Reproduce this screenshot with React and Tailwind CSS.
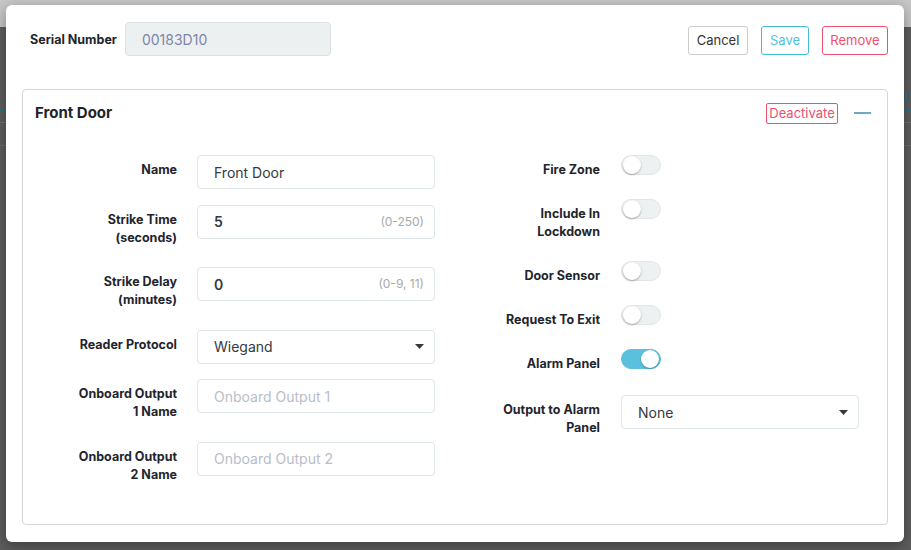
import React from 'react';

const font = { fontFamily: 'Inter, "Noto Sans", sans-serif' };

const Label = ({ children }) => (
  <div className="w-[142px] shrink-0 pt-[6px] pb-[5px] text-right text-[12.5px] leading-[18px] font-bold text-[#1f252d]">
    {children}
  </div>
);

const TextInput = ({ value, placeholder, hint, bold }) => (
  <div className="flex h-[34px] w-[238px] items-center justify-between rounded-[4px] border border-[#dfe6e8] bg-white pl-4 pr-[10px]">
    {value ? (
      <span className={`text-[14px] text-[#343a40] ${bold ? 'font-semibold' : ''}`}>{value}</span>
    ) : (
      <span className="text-[14px] text-[#b9bdc9]">{placeholder}</span>
    )}
    {hint && <span className="text-[12px] text-[#a9a9a9]">{hint}</span>}
  </div>
);

const SelectBox = ({ value }) => (
  <div className="flex h-[34px] w-[238px] items-center justify-between rounded-[4px] border border-[#dfe6e8] bg-white pl-4 pr-[10px]">
    <span className="text-[14px] text-[#343a40]">{value}</span>
    <svg width="9" height="5" viewBox="0 0 9 5">
      <path d="M0 0h9L4.5 5z" fill="#343a40" />
    </svg>
  </div>
);

const Toggle = ({ on }) => (
  <div
    className={`flex h-[20px] w-[40px] items-center rounded-full border px-[1px] ${
      on ? 'justify-end border-[#5bc0de] bg-[#5bc0de]' : 'justify-start border-[#e2e6e6] bg-[#eef1f1]'
    }`}>
    <div className="h-[18px] w-[18px] rounded-full bg-white shadow-[0_1px_2px_rgba(0,0,0,0.3)]" />
  </div>
);

const LeftRow = ({ label, children }) => (
  <div className="mb-[15.5px] flex items-start gap-5">
    <Label>{label}</Label>
    {children}
  </div>
);

const RightRow = ({ label, children, className = '' }) => (
  <div className={`mb-[15px] flex items-start gap-[21px] ${className}`}>
    <Label>{label}</Label>
    {children}
  </div>
);

export default function App() {
  return (
    <div className="relative h-[550px] w-[911px] overflow-hidden bg-[#5d5d5d]" style={font}>
      {/* page under the overlay */}
      <div className="h-[27px] bg-[#c6c6c6]" />
      <div className="mt-[54px] h-[30px] border-y border-[#2f6f84]">
        <div className="flex justify-end pt-[3px] text-[15px] text-[#2f6f84]">ar</div>
      </div>
      <div className="mt-[11px] border-t border-[#727272]" />
      <div className="mt-[22px] border-t border-[#6c6c6c]" />

      <div className="absolute left-[6px] top-[5px] h-[537px] w-[898px] rounded-[6px] bg-white p-4 shadow-[0_4px_14px_rgba(0,0,0,0.35)]">
        <div className="flex items-center justify-between pl-2 pt-[1px]">
          <div className="flex items-center gap-[8px]">
            <span className="pt-[2px] text-[12.5px] font-bold text-[#1f252d]">Serial Number</span>
            <div className="flex h-[34px] w-[206px] items-center rounded-[4px] border border-[#dde3e5] bg-[#edf0f1] pl-4 text-[14px] text-[#7d86a8]">
              00183D10
            </div>
          </div>
          <div className="mt-[3px] flex items-center gap-[13px]">
            <button className="h-[29px] w-[60px] rounded-[3px] border border-[#cccccc] text-[13px] text-[#333]">Cancel</button>
            <button className="h-[29px] w-[48px] rounded-[3px] border border-[#40bcd8] text-[13px] text-[#4fc3e0]">Save</button>
            <button className="h-[29px] w-[66px] rounded-[3px] border border-[#f0506e] text-[13px] text-[#f0506e]">Remove</button>
          </div>
        </div>

        <div className="mt-[33px] rounded-[4px] border border-[#d6d6d6] px-3 pt-3 pb-5">
          <div className="flex h-[22px] items-center justify-between">
            <span className="text-[15px] font-bold text-[#1e2329]">Front Door</span>
            <div className="flex items-center gap-4 pr-[4px]">
              <button className="h-[21px] w-[72px] rounded-[2px] border border-[#f0506e] text-[13px] leading-none text-[#f0506e]">
                Deactivate
              </button>
              <div className="h-[1.5px] w-[17px] bg-[#6fa6c4]" />
            </div>
          </div>

          <div className="mt-[31px] flex gap-[23px]">
            <div>
              <LeftRow label="Name">
                <TextInput value="Front Door" />
              </LeftRow>
              <LeftRow label={<>Strike Time<br />(seconds)</>}>
                <TextInput value="5" hint="(0-250)" bold />
              </LeftRow>
              <LeftRow label={<>Strike Delay<br />(minutes)</>}>
                <TextInput value="0" hint="(0-9, 11)" bold />
              </LeftRow>
              <LeftRow label="Reader Protocol">
                <SelectBox value="Wiegand" />
              </LeftRow>
              <LeftRow label={<>Onboard Output<br />1 Name</>}>
                <TextInput placeholder="Onboard Output 1" />
              </LeftRow>
              <LeftRow label={<>Onboard Output<br />2 Name</>}>
                <TextInput placeholder="Onboard Output 2" />
              </LeftRow>
            </div>
            <div>
              <RightRow label="Fire Zone">
                <Toggle />
              </RightRow>
              <RightRow label={<>Include In<br />Lockdown</>}>
                <Toggle />
              </RightRow>
              <RightRow label="Door Sensor">
                <Toggle />
              </RightRow>
              <RightRow label="Request To Exit">
                <Toggle />
              </RightRow>
              <RightRow label="Alarm Panel">
                <Toggle on />
              </RightRow>
              <RightRow label={<>Output to Alarm<br />Panel</>} className="pt-[2px]">
                <SelectBox value="None" />
              </RightRow>
            </div>
          </div>
        </div>
      </div>
    </div>
  );
}
